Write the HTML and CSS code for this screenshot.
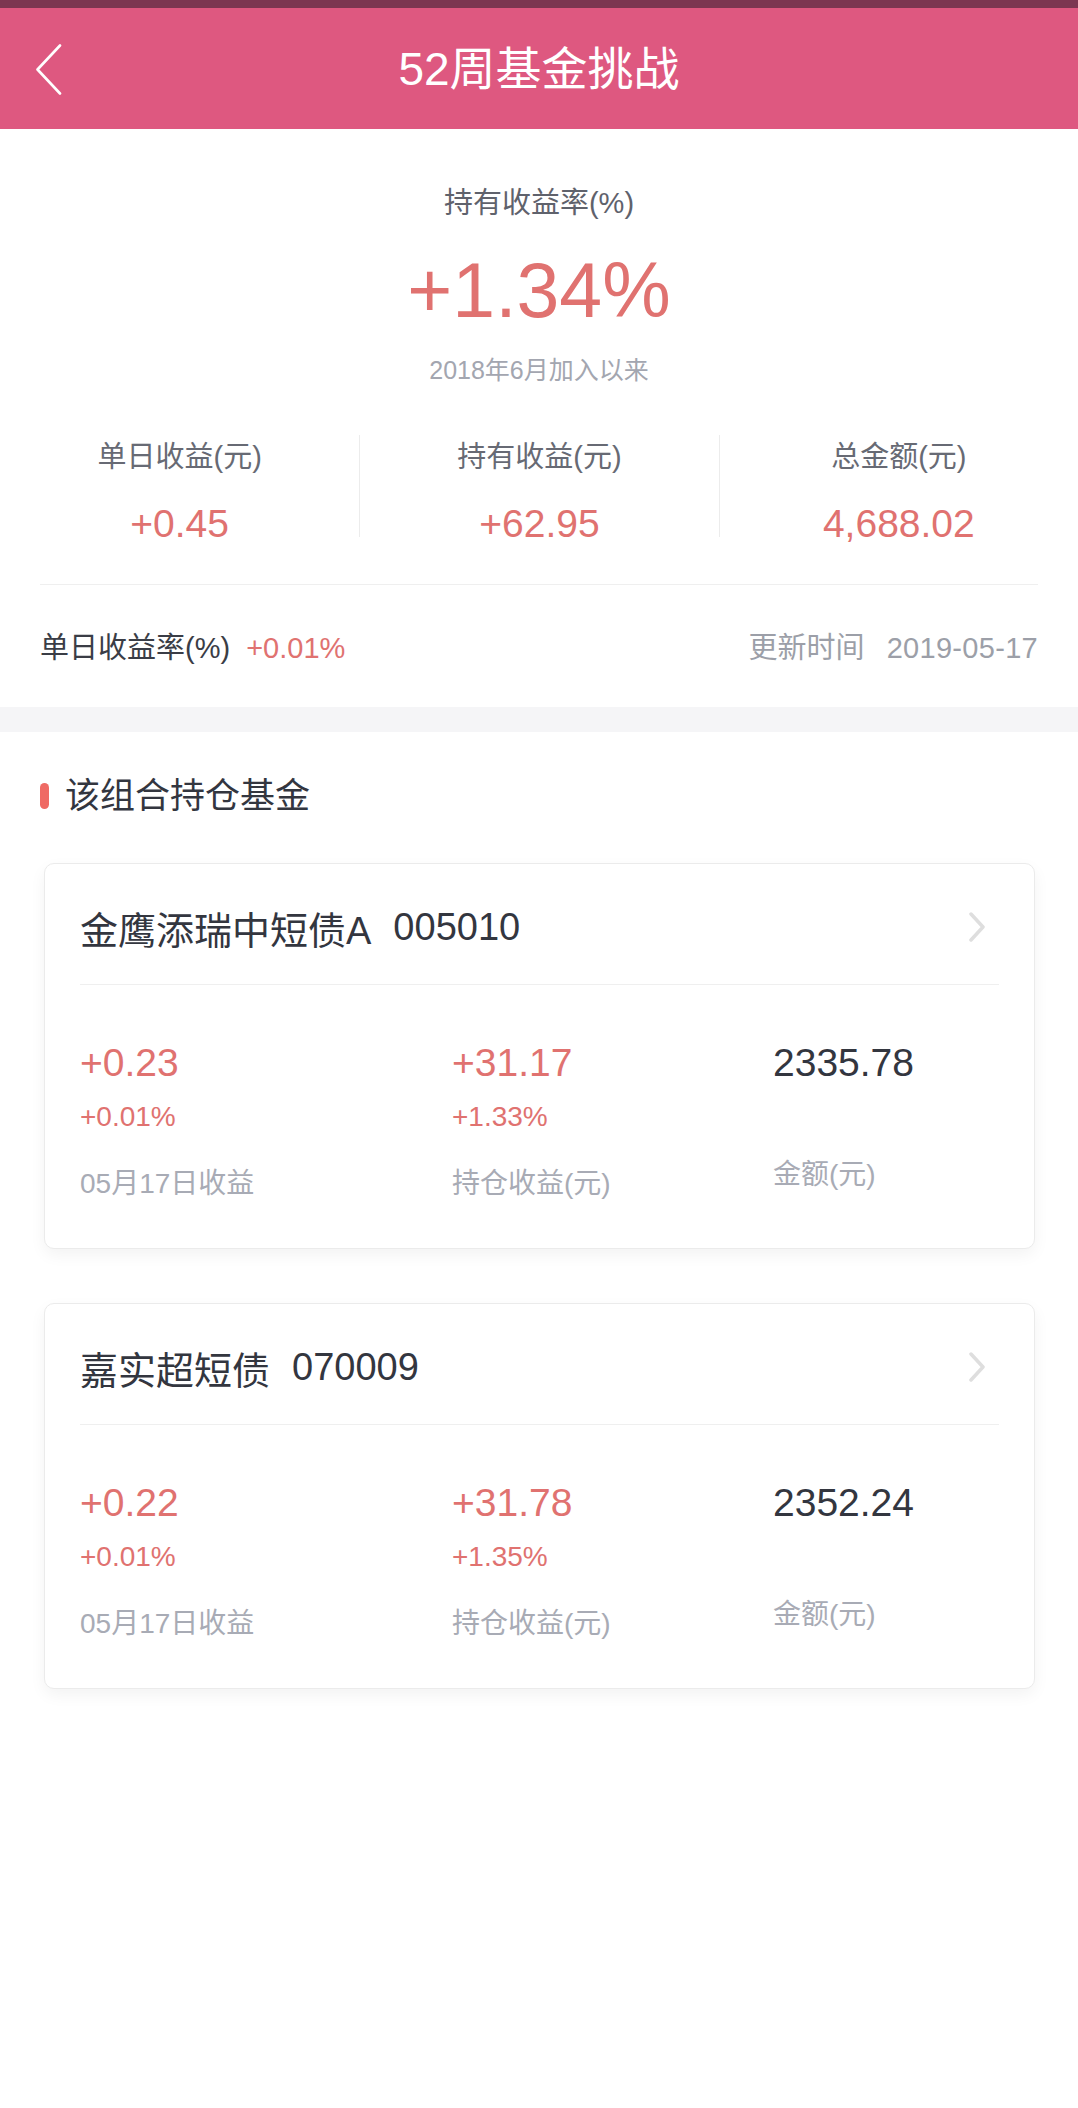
FILE: index.html
```html
<!DOCTYPE html>
<html lang="zh-CN">
<head>
  <meta charset="UTF-8">
  <meta name="viewport" content="width=device-width, initial-scale=1.0">
  <title>52周基金挑战</title>
  <link rel="stylesheet" href="styles.css">
</head>
<body>
  <div class="status"></div>

  <header class="nav">
    <a class="nav-back">
      <svg width="27" height="51" viewBox="0 0 27 51">
        <polyline points="25,1.5 2.5,25.5 25,49.5" fill="none" stroke="#fff" stroke-width="2.6" stroke-linecap="round" stroke-linejoin="round"/>
      </svg>
    </a>
    <h1 class="nav-title">52周基金挑战</h1>
    <span></span>
  </header>

  <section class="summary">
    <div class="rate-label">持有收益率(%)</div>
    <div class="rate-value">+1.34%</div>
    <div class="rate-since">2018年6月加入以来</div>

    <div class="stats">
      <div class="stat">
        <div class="stat-label">单日收益(元)</div>
        <div class="stat-value">+0.45</div>
      </div>
      <div class="stat">
        <div class="stat-label">持有收益(元)</div>
        <div class="stat-value">+62.95</div>
      </div>
      <div class="stat">
        <div class="stat-label">总金额(元)</div>
        <div class="stat-value">4,688.02</div>
      </div>
    </div>

    <div class="summary-line"></div>

    <div class="summary-foot">
      <div>
        <span class="foot-label">单日收益率(%)</span>
        <span class="foot-rate">+0.01%</span>
      </div>
      <div class="foot-time">
        <span>更新时间</span>
        <span class="foot-date">2019-05-17</span>
      </div>
    </div>
  </section>

  <div class="gap"></div>

  <section class="holdings">
    <h2 class="section-title"><span class="section-mark"></span>该组合持仓基金</h2>

    <div class="fund-card">
      <div class="fund-head">
        <span class="fund-name">金鹰添瑞中短债A</span>
        <span class="fund-code">005010</span>
        <svg class="fund-arrow" width="20" height="30" viewBox="0 0 20 30">
          <polyline points="4,2 16,15 4,28" fill="none" stroke="#dedede" stroke-width="3.5" stroke-linecap="round" stroke-linejoin="round"/>
        </svg>
      </div>
      <div class="fund-body">
        <div class="fund-col">
          <div class="fund-value up">+0.23</div>
          <div class="fund-sub up">+0.01%</div>
          <div class="fund-label">05月17日收益</div>
        </div>
        <div class="fund-col">
          <div class="fund-value up">+31.17</div>
          <div class="fund-sub up">+1.33%</div>
          <div class="fund-label">持仓收益(元)</div>
        </div>
        <div class="fund-col">
          <div class="fund-value">2335.78</div>
          <div class="fund-label fund-label-raised">金额(元)</div>
        </div>
      </div>
    </div>

    <div class="fund-card">
      <div class="fund-head">
        <span class="fund-name">嘉实超短债</span>
        <span class="fund-code">070009</span>
        <svg class="fund-arrow" width="20" height="30" viewBox="0 0 20 30">
          <polyline points="4,2 16,15 4,28" fill="none" stroke="#dedede" stroke-width="3.5" stroke-linecap="round" stroke-linejoin="round"/>
        </svg>
      </div>
      <div class="fund-body">
        <div class="fund-col">
          <div class="fund-value up">+0.22</div>
          <div class="fund-sub up">+0.01%</div>
          <div class="fund-label">05月17日收益</div>
        </div>
        <div class="fund-col">
          <div class="fund-value up">+31.78</div>
          <div class="fund-sub up">+1.35%</div>
          <div class="fund-label">持仓收益(元)</div>
        </div>
        <div class="fund-col">
          <div class="fund-value">2352.24</div>
          <div class="fund-label fund-label-raised">金额(元)</div>
        </div>
      </div>
    </div>
  </section>
</body>
</html>
```

FILE: styles.css
```css
* {
  margin: 0;
  padding: 0;
  box-sizing: border-box;
}

body {
  font-family: "Liberation Sans", "Noto Sans CJK SC", sans-serif;
  background: #fff;
  color: #33363f;
}

/* top bar */
.status {
  height: 8px;
  background: #7c3651;
}

.nav {
  height: 121px;
  background: #de5880;
  display: grid;
  grid-template-columns: 1fr auto 1fr;
  align-items: center;
}

.nav-back {
  display: flex;
  padding-left: 35px;
  padding-top: 2px;
}

.nav-title {
  font-size: 46px;
  font-weight: normal;
  color: #fff;
  line-height: 60px;
}

/* summary */
.summary {
  padding-top: 54px;
  padding-bottom: 39px;
  text-align: center;
}

.rate-label {
  font-size: 29px;
  line-height: 40px;
  color: #5f626c;
}

.rate-value {
  font-size: 77px;
  line-height: 80px;
  margin-top: 27px;
  color: #e07270;
}

.rate-since {
  font-size: 25px;
  line-height: 34px;
  margin-top: 23px;
  color: #a3a6b0;
}

.stats {
  display: grid;
  grid-template-columns: 1fr 1fr 1fr;
  margin-top: 48px;
}

.stat {
  padding-top: 2px;
  height: 102px;
}

.stat + .stat {
  border-left: 1px solid #ececec;
}

.stat-label {
  font-size: 29px;
  line-height: 40px;
  color: #676a74;
}

.stat-value {
  font-size: 39px;
  line-height: 26px;
  margin-top: 34px;
  color: #e07270;
}

.summary-line {
  height: 1px;
  margin: 47px 40px 0;
  background: #efefef;
}

.summary-foot {
  display: flex;
  justify-content: space-between;
  padding: 0 40px;
  margin-top: 43px;
  font-size: 29px;
  line-height: 40px;
  text-align: left;
}

.foot-label {
  color: #3a3d46;
}

.foot-rate {
  color: #e07270;
  margin-left: 8px;
}

.foot-time {
  color: #9c9fa8;
}

.foot-date {
  margin-left: 14px;
  letter-spacing: 0.3px;
}

.gap {
  height: 25px;
  background: #f5f5f7;
}

/* holdings */
.holdings {
  padding: 44px 43px 80px 44px;
}

.section-title {
  display: flex;
  align-items: center;
  font-size: 35px;
  font-weight: normal;
  line-height: 40px;
  color: #33363f;
}

.section-mark {
  width: 9px;
  height: 26px;
  border-radius: 5px;
  background: #ef6a64;
  margin-left: -4px;
  margin-right: 16px;
}

.fund-card {
  margin-top: 47px;
  border: 1px solid #ebebeb;
  border-radius: 10px;
  background: #fff;
  box-shadow: 0 6px 16px rgba(0, 0, 0, 0.05);
  padding: 41px 35px 47px 35px;
}

.fund-card + .fund-card {
  margin-top: 54px;
}

.fund-head {
  display: flex;
  align-items: center;
  height: 44px;
  font-size: 38px;
  color: #33363f;
}

.fund-code {
  margin-left: 22px;
}

.fund-arrow {
  margin-left: auto;
  margin-right: 12px;
}

.fund-body {
  display: grid;
  grid-template-columns: 372px 321px 1fr;
  align-items: start;
  border-top: 1px solid #efefef;
  margin-top: 35px;
  padding-top: 55px;
}

.fund-value {
  font-size: 39px;
  line-height: 46px;
  color: #33363f;
}

.fund-value.up,
.fund-sub.up {
  color: #e07270;
}

.fund-sub {
  font-size: 28px;
  line-height: 34px;
  margin-top: 14px;
}

.fund-label {
  font-size: 28px;
  line-height: 34px;
  margin-top: 33px;
  color: #a8abb5;
}

.fund-label-raised {
  margin-top: 72px;
}
```
